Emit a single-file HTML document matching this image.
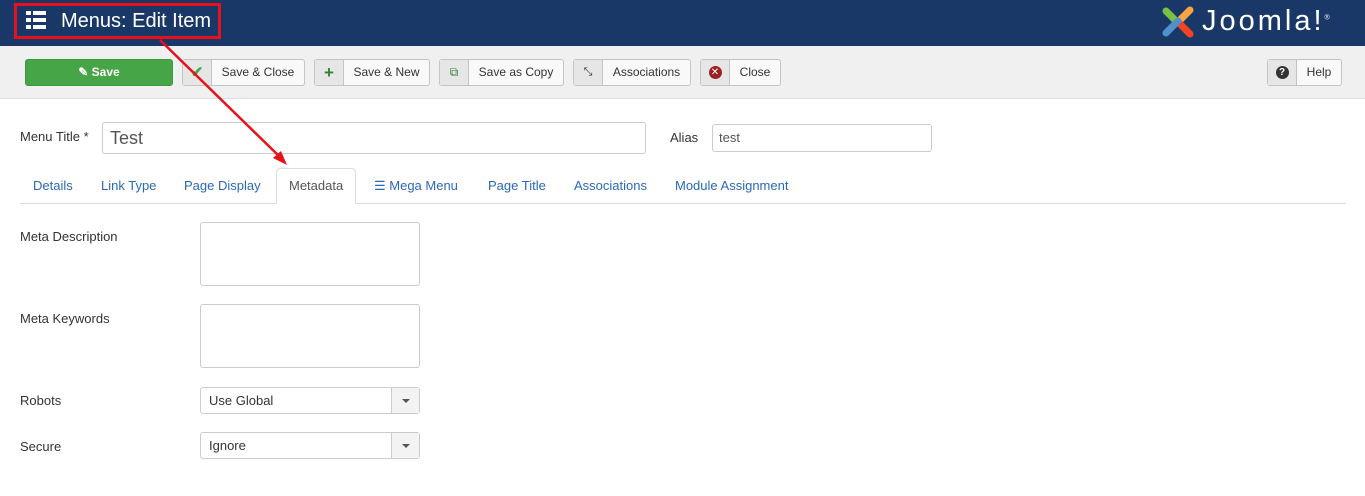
<!DOCTYPE html>
<html><head><style>
*{box-sizing:border-box;margin:0;padding:0}
body{width:1365px;height:496px;background:#fff;font-family:"Liberation Sans",sans-serif;font-size:13px;color:#333;position:relative;overflow:hidden}
.hdr{position:absolute;left:0;top:0;width:1365px;height:46px;background:#1a3867}
.tb{position:absolute;left:0;top:46px;width:1365px;height:53px;background:#f0f0f0;border-bottom:1px solid #ddd}
.btn{position:absolute;top:59px;height:27px;border:1px solid #c4c4c4;border-radius:3px;background:#f9f9f9;font-size:12px;color:#333;line-height:25px}
.btn .ic{position:absolute;left:0;top:0;width:29px;height:25px;background:#e6e6e6;border-right:1px solid #c4c4c4;text-align:center}
.btn .t{position:absolute;left:29px;right:0;text-align:center}
.a{position:absolute}
.inp{position:absolute;border:1px solid #ccc;border-radius:3px;background:#fff}
.lbl{position:absolute;font-size:13px;color:#333}
.tab{position:absolute;top:178px;font-size:13px;color:#2a69b8}
.sel{position:absolute;left:200px;width:220px;height:27px;border:1px solid #ccc;border-radius:3px;background:#fff;font-size:13px;line-height:25px;padding-left:8px}
.sel .ar{position:absolute;right:0;top:0;width:28px;height:25px;border-left:1px solid #ccc;background:#f3f3f3}
.sel .ar:after{content:"";position:absolute;left:10px;top:11px;border:4px solid transparent;border-top:4px solid #555}
</style></head><body>
<div class="hdr"></div>
<svg class="a" style="left:26px;top:11px" width="20" height="18"><g fill="#fff"><rect x="0" y="0" width="5" height="4"/><rect x="7" y="0" width="13" height="4"/><rect x="0" y="7" width="5" height="4"/><rect x="7" y="7" width="13" height="4"/><rect x="0" y="14" width="5" height="4"/><rect x="7" y="14" width="13" height="4"/></g></svg>
<div class="a" style="left:61px;top:10px;color:#fff;font-size:20px">Menus: Edit Item</div>
<div class="a" style="left:14px;top:3px;width:207px;height:36px;border:3px solid #e8101a"></div>
<svg class="a" style="left:1158px;top:3px" width="40" height="38"><g stroke-width="7" stroke-linecap="round" fill="none"><path d="M8 8 L20 20" stroke="#7ac143"/><path d="M32 7 L20 19" stroke="#f9a541"/><path d="M32 31 L20 19" stroke="#f44321"/><path d="M8 30 L20 18" stroke="#5091cd"/></g></svg>
<div class="a" style="left:1202px;top:5px;color:#fff;font-size:29px;letter-spacing:3px">Joomla!<sup style="font-size:7px">®</sup></div>
<div class="tb"></div>
<div class="btn" style="left:25px;width:148px;background:#46a546;border-color:#3e9a3e;color:#fff;font-weight:bold;text-align:center">&#9998; Save</div>
<div class="btn" style="left:182px;width:123px"><div class="ic" style="color:#46a546;font-weight:bold;font-size:15px">✔</div><div class="t">Save &amp; Close</div></div>
<div class="btn" style="left:314px;width:116px"><div class="ic" style="color:#378137;font-weight:bold;font-size:17px">+</div><div class="t">Save &amp; New</div></div>
<div class="btn" style="left:439px;width:125px"><div class="ic" style="color:#378137">⧉</div><div class="t">Save as Copy</div></div>
<div class="btn" style="left:573px;width:118px"><div class="ic" style="font-size:11px">⤡</div><div class="t">Associations</div></div>
<div class="btn" style="left:700px;width:81px"><div class="ic"><span style="display:inline-block;width:13px;height:13px;border-radius:50%;background:#9c2121;color:#fff;font-size:10px;line-height:13px;vertical-align:middle">✕</span></div><div class="t">Close</div></div>
<div class="btn" style="left:1267px;width:75px"><div class="ic"><span style="display:inline-block;width:13px;height:13px;border-radius:50%;background:#333;color:#fff;font-size:10px;font-weight:bold;line-height:13px;vertical-align:middle">?</span></div><div class="t">Help</div></div>
<div class="lbl" style="left:20px;top:129px">Menu Title *</div>
<div class="inp" style="left:102px;top:122px;width:544px;height:32px;font-size:18px;padding:5px 7px;color:#555">Test</div>
<div class="lbl" style="left:670px;top:130px">Alias</div>
<div class="inp" style="left:712px;top:124px;width:220px;height:28px;padding:5px 6px;color:#555">test</div>
<div class="a" style="left:20px;top:203px;width:1326px;height:1px;background:#ddd"></div>
<div class="a" style="left:276px;top:168px;width:80px;height:36px;border:1px solid #ddd;border-bottom-color:#fff;border-radius:4px 4px 0 0;background:#fff"></div>
<div class="tab" style="left:33px">Details</div>
<div class="tab" style="left:101px">Link Type</div>
<div class="tab" style="left:184px">Page Display</div>
<div class="tab" style="left:289px;color:#555">Metadata</div>
<div class="tab" style="left:374px">☰ Mega Menu</div>
<div class="tab" style="left:488px">Page Title</div>
<div class="tab" style="left:574px">Associations</div>
<div class="tab" style="left:675px">Module Assignment</div>
<div class="lbl" style="left:20px;top:229px">Meta Description</div>
<div class="inp" style="left:200px;top:222px;width:220px;height:64px"></div>
<div class="lbl" style="left:20px;top:311px">Meta Keywords</div>
<div class="inp" style="left:200px;top:304px;width:220px;height:64px"></div>
<div class="lbl" style="left:20px;top:393px">Robots</div>
<div class="sel" style="top:387px">Use Global<div class="ar"></div></div>
<div class="lbl" style="left:20px;top:439px">Secure</div>
<div class="sel" style="top:432px">Ignore<div class="ar"></div></div>
<svg class="a" style="left:0;top:0" width="1365" height="496"><line x1="160" y1="40" x2="280" y2="157" stroke="#e8101a" stroke-width="2.5"/><polygon points="287,165 273,158 281,151" fill="#e8101a"/></svg>
</body></html>
